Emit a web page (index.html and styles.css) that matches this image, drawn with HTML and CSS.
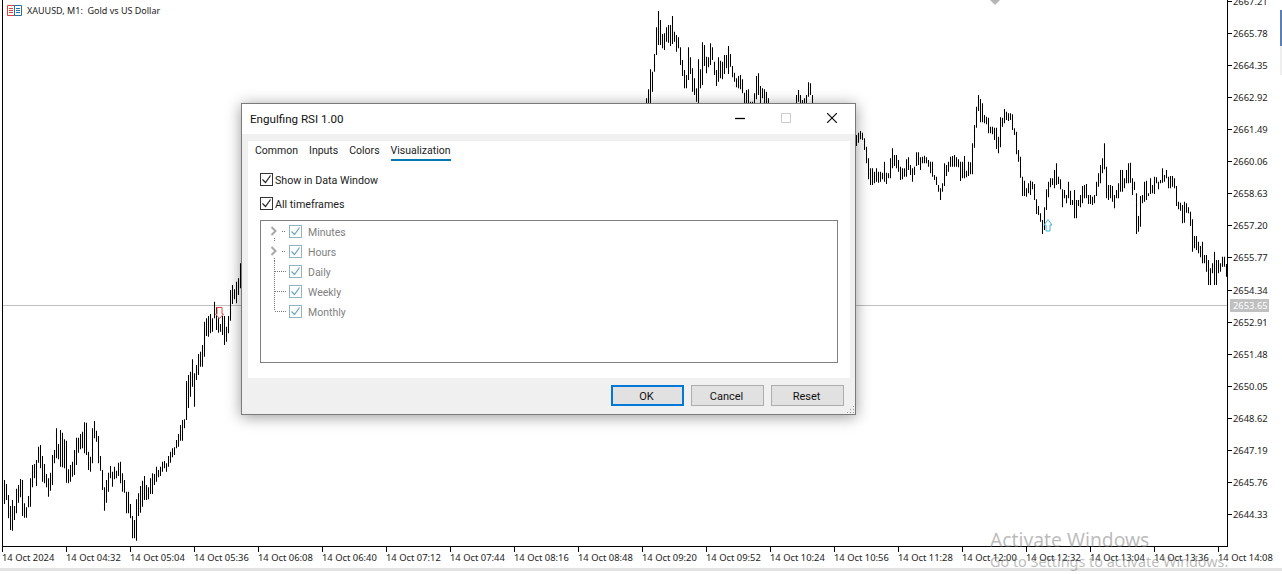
FILE: index.html
```html
<!DOCTYPE html>
<html lang="en">
<head>
  <meta charset="UTF-8">
  <title>XAUUSD, M1</title>
  <link rel="stylesheet" href="styles.css">
</head>
<body>
  <svg class="defs" width="0" height="0">
    <symbol id="tick" viewBox="0 0 13 13">
      <path d="M2.5 6.5 5.5 9.5 10.5 2.5" fill="none" stroke="currentColor" stroke-width="1.2"/>
    </symbol>
    <symbol id="branch-open" viewBox="0 0 28 20">
      <path d="M10.5 6 14.5 10 10.5 14" fill="none" stroke="#a8a8a8" stroke-width="2"/>
      <path d="M21 10.5H25M13.5 17V20" fill="none" stroke="#777" stroke-dasharray="1 1"/>
    </symbol>
    <symbol id="branch-mid" viewBox="0 0 28 20">
      <path d="M13.5 0V20M14 10.5H25" fill="none" stroke="#777" stroke-dasharray="1 1"/>
    </symbol>
    <symbol id="branch-end" viewBox="0 0 28 20">
      <path d="M13.5 0V10M14 10.5H25" fill="none" stroke="#777" stroke-dasharray="1 1"/>
    </symbol>
  </svg>

  <div class="terminal">
    <div class="chart-row">
      <div class="plot">
        <svg class="bars" viewBox="3 0 1224 546" width="1224" height="546">
          <path class="price-line" d="M3 305.5H1227"/>
          <path id="bars-path" class="bars-path" d=""/>
          <polygon class="arrow-down" points="217,307.5 222,307.5 222,314 223.5,314 219.5,318.5 215.5,314 217,314"/>
          <polygon class="arrow-up" points="1048,219.5 1052,225 1050,225 1050,231 1046,231 1046,225 1044,225"/>
          <polygon class="marker" points="995,5 990,0 1000,0"/>
        </svg>
        <div class="legend">
          <svg class="legend-icon" viewBox="0 0 15 11" width="15" height="11">
            <path d="M.5.5H7.5V10.5H.5ZM2 3.5H6M2 5.5H6M2 7.5H6" fill="none" stroke="#d0473c"/>
            <path d="M7.5.5H14.5V10.5H7.5ZM9 3.5H13M9 5.5H13M9 7.5H13" fill="none" stroke="#2a6f9e"/>
          </svg>
          <span>XAUUSD, M1:&nbsp; Gold vs US Dollar</span>
        </div>
      </div>
      <div class="price-axis">
        <ul class="price-list">
          <li>2667.21</li>
          <li>2665.78</li>
          <li>2664.35</li>
          <li>2662.92</li>
          <li>2661.49</li>
          <li>2660.06</li>
          <li>2658.63</li>
          <li>2657.20</li>
          <li>2655.77</li>
          <li>2654.34</li>
          <li>2652.91</li>
          <li>2651.48</li>
          <li>2650.05</li>
          <li>2648.62</li>
          <li>2647.19</li>
          <li>2645.76</li>
          <li>2644.33</li>
        </ul>
        <span class="price-tag">2653.65</span>
      </div>
      <div class="edge">
        <div class="edge-blue"></div>
        <div class="edge-light"></div>
      </div>
    </div>

    <div class="time-axis">
      <span>14 Oct 2024</span>
      <span>14 Oct 04:32</span>
      <span>14 Oct 05:04</span>
      <span>14 Oct 05:36</span>
      <span>14 Oct 06:08</span>
      <span>14 Oct 06:40</span>
      <span>14 Oct 07:12</span>
      <span>14 Oct 07:44</span>
      <span>14 Oct 08:16</span>
      <span>14 Oct 08:48</span>
      <span>14 Oct 09:20</span>
      <span>14 Oct 09:52</span>
      <span>14 Oct 10:24</span>
      <span>14 Oct 10:56</span>
      <span>14 Oct 11:28</span>
      <span>14 Oct 12:00</span>
      <span>14 Oct 12:32</span>
      <span>14 Oct 13:04</span>
      <span>14 Oct 13:36</span>
      <span>14 Oct 14:08</span>
    </div>
    <div class="bottom-strip"></div>

    <div class="watermark">
      <div class="watermark-big">Activate Windows</div>
      <div class="watermark-small">Go to Settings to activate Windows.</div>
    </div>

    <div class="dialog">
      <div class="titlebar">
        <span class="title">Engulfing RSI 1.00</span>
        <div class="win-buttons">
          <svg viewBox="0 0 10 10" width="10" height="10"><path d="M0 5.5H10" stroke="#000" stroke-width="1.3"/></svg>
          <svg viewBox="0 0 10 10" width="10" height="10"><path d="M.5.5H9.5V9.5H.5Z" fill="none" stroke="#ccc"/></svg>
          <svg viewBox="0 0 10 10" width="10" height="10"><path d="M0 0 10 10M10 0 0 10" stroke="#000" stroke-width="1.1"/></svg>
        </div>
      </div>

      <div class="panel">
        <div class="tabs">
          <span class="tab">Common</span>
          <span class="tab">Inputs</span>
          <span class="tab">Colors</span>
          <span class="tab active">Visualization</span>
        </div>

        <div class="option option-first">
          <span class="check"><svg width="13" height="13"><use href="#tick"/></svg></span>
          <span class="label">Show in Data Window</span>
        </div>
        <div class="option">
          <span class="check"><svg width="13" height="13"><use href="#tick"/></svg></span>
          <span class="label">All timeframes</span>
        </div>

        <ul class="tree">
          <li>
            <svg class="branch" width="28" height="20"><use href="#branch-open"/></svg>
            <span class="check check-off"><svg width="13" height="13"><use href="#tick"/></svg></span>
            <span class="label">Minutes</span>
          </li>
          <li>
            <svg class="branch" width="28" height="20"><use href="#branch-open"/></svg>
            <span class="check check-off"><svg width="13" height="13"><use href="#tick"/></svg></span>
            <span class="label">Hours</span>
          </li>
          <li>
            <svg class="branch" width="28" height="20"><use href="#branch-mid"/></svg>
            <span class="check check-off"><svg width="13" height="13"><use href="#tick"/></svg></span>
            <span class="label">Daily</span>
          </li>
          <li>
            <svg class="branch" width="28" height="20"><use href="#branch-mid"/></svg>
            <span class="check check-off"><svg width="13" height="13"><use href="#tick"/></svg></span>
            <span class="label">Weekly</span>
          </li>
          <li>
            <svg class="branch" width="28" height="20"><use href="#branch-end"/></svg>
            <span class="check check-off"><svg width="13" height="13"><use href="#tick"/></svg></span>
            <span class="label">Monthly</span>
          </li>
        </ul>
      </div>

      <div class="dialog-footer">
        <button class="btn btn-default">OK</button>
        <button class="btn">Cancel</button>
        <button class="btn">Reset</button>
      </div>
      <svg class="gripper" viewBox="0 0 9 9" width="9" height="9">
        <path d="M7 1h1v1H7zM4 4h1v1H4zM7 4h1v1H7zM1 7h1v1H1zM4 7h1v1H4zM7 7h1v1H7z" fill="#999"/>
      </svg>
    </div>
  </div>

  <script src="chart.js"></script>
</body>
</html>
```

FILE: styles.css
```css
* {
  box-sizing: border-box;
}
body {
  margin: 0;
  background-color: #fff;
  font-family: "Noto Sans", Arial, sans-serif;
  color: #000;
}
ul {
  list-style: none;
  margin: 0;
  padding: 0;
}
.defs {
  position: absolute;
}
.terminal {
  position: relative;
  display: flex;
  flex-direction: column;
  width: 1282px;
  height: 574px;
  overflow: hidden;
}

/* chart */
.chart-row {
  display: flex;
  height: 547px;
}
.plot {
  position: relative;
  width: 1225px;
  margin-left: 2px;
  border-left: 1px solid #000;
  border-bottom: 1px solid #000;
}
.bars {
  position: absolute;
  left: 0;
  top: 0;
}
.bars-path {
  fill: none;
  stroke: #000;
  stroke-width: 1.05;
}
.price-line {
  fill: none;
  stroke: #c0c0c0;
}
.arrow-down {
  fill: #fff;
  stroke: #e04a44;
}
.arrow-up {
  fill: #fff;
  stroke: #45b2d8;
}
.marker {
  fill: #b5b5b5;
}
.legend {
  position: absolute;
  left: 4px;
  top: 5px;
  display: flex;
  align-items: center;
  gap: 5px;
  font-size: 9px;
  line-height: 11px;
  color: #222;
}

/* price axis */
.price-axis {
  position: relative;
  width: 53px;
  border-left: 1px solid #000;
  overflow: hidden;
}
.price-list {
  margin-top: -14.9px;
}
.price-list li {
  display: flex;
  align-items: center;
  gap: 1px;
  height: 32.1px;
  font-size: 9.4px;
  color: #222;
}
.price-list li::before {
  content: "";
  width: 4px;
  height: 1px;
  background-color: #000;
}
.price-tag {
  position: absolute;
  left: 2px;
  top: 299px;
  width: 39px;
  height: 13px;
  padding-left: 3px;
  background-color: #c0c0c0;
  color: #fff;
  font-size: 9.4px;
  line-height: 13px;
}
.edge {
  width: 2px;
  padding-top: 10px;
}
.edge-blue {
  height: 36px;
  background-color: #5a7fb5;
}
.edge-light {
  height: 29px;
  background-color: #eee;
}

/* time axis */
.time-axis {
  display: flex;
  height: 21px;
  padding-left: 2px;
}
.time-axis span {
  flex: none;
  width: 64px;
  font-size: 9.4px;
  line-height: 12px;
  color: #222;
  white-space: nowrap;
}
.time-axis span::before {
  content: "";
  display: block;
  width: 1px;
  height: 5px;
  background-color: #000;
}
.bottom-strip {
  height: 3px;
  background-color: #e3e3e3;
}

.watermark {
  position: absolute;
  left: 990px;
  top: 527px;
  color: rgba(120, 120, 120, 0.5);
  white-space: nowrap;
}
.watermark-big {
  font-size: 19.3px;
  line-height: 26px;
}
.watermark-small {
  font-size: 14.4px;
  line-height: 18px;
}

/* dialog */
.dialog {
  position: absolute;
  left: 241px;
  top: 103px;
  display: flex;
  flex-direction: column;
  width: 615px;
  height: 312px;
  border: 1px solid #7a7a7a;
  background-color: #f0f0f0;
  box-shadow: 0 2px 14px rgba(0, 0, 0, 0.4);
  font-family: Roboto, Arial, sans-serif;
  font-size: 11px;
}
.titlebar {
  display: flex;
  align-items: center;
  justify-content: space-between;
  height: 30px;
  padding: 0 18px 2px 8px;
  background-color: #fff;
}
.title {
  padding-top: 2px;
  font-size: 11.6px;
  color: #111;
}
.win-buttons {
  display: flex;
  gap: 36px;
}
.panel {
  width: 602px;
  height: 237px;
  margin: 7px 0 0 6px;
  padding: 0 12px;
  background-color: #fff;
}
.tabs {
  display: flex;
  gap: 11px;
  height: 20px;
  margin-left: -5px;
}
.tab {
  height: 20px;
  padding-top: 2px;
  font-size: 10.5px;
  line-height: 16px;
  color: #222;
}
.tab.active {
  border-bottom: 2px solid #0078b4;
}
.option {
  display: flex;
  align-items: center;
  gap: 2px;
  height: 13px;
  margin-top: 11px;
  font-size: 10.7px;
  color: #222;
}
.option-first {
  margin-top: 12px;
}
.label {
  padding-top: 2px;
}
.check {
  flex: none;
  width: 13px;
  height: 13px;
  border: 1px solid #333;
  color: #222;
}
.check svg {
  display: block;
  margin: -1px;
}
.tree {
  height: 143px;
  margin-top: 10px;
  border: 1px solid #808080;
  font-size: 10.5px;
  color: #808080;
}
.tree li {
  display: flex;
  align-items: center;
  gap: 6px;
  height: 20px;
}
.branch {
  flex: none;
  margin-right: -6px;
}
.check-off {
  border-color: #90b4c4;
  color: #6aa5bd;
}
.dialog-footer {
  display: flex;
  justify-content: flex-end;
  gap: 7px;
  padding: 7px 11px 0 0;
}
.btn {
  width: 73px;
  height: 21px;
  padding: 2px 2px 0 0;
  border: 1px solid #adadad;
  border-radius: 0;
  background-color: #e1e1e1;
  color: #111;
  font: inherit;
}
.btn-default {
  border: 2px solid #0078d7;
}
.gripper {
  position: absolute;
  right: 0;
  bottom: 0;
}
```

FILE: chart.js
```js
// bars traced off the chart, two columns per bar (top, bottom) in 1/3 px from the y origin of each run
const runs = [
  { x: 4, y: 400, bars: [
    240,312, 252,300, 285,355, 318,390, 300,392, 318,360, 266,340, 255,308, 237,292, 240,348,
    310,353, 322,353, 288,322, 235,320, 195,262, 192,235, 180,258, 140,188, 135,205, 168,245,
    192,250, 222,262, 235,290, 218,272, 165,255, 150,190, 85,175, 132,178, 90,200, 98,202,
    118,205, 122,248, 208,250, 195,245, 185,230, 150,225, 113,195, 113,158, 102,148, 95,145,
    67,160, 68,165, 155,210, 170,215, 85,190, 63,115, 92,125, 108,190, 168,212, 210,270,
    262,332, 240,308, 218,275, 198,235, 215,260, 200,238, 212,235, 188,228, 185,250, 220,275,
    240,278, 275,340, 275,340, 312,355, 348,415, 360,415, 298,422, 280,348, 258,338, 242,320,
    228,300, 255,300, 262,298, 235,282, 220,282, 222,255, 200,245, 210,232, 200,228, 185,215,
    183,205, 190,215, 168,200, 155,188, 145,172, 142,165, 120,145, 102,140, 75,122, 60,122,
    58,85
  ] },
  { x: 186, y: 250, bars: [
    393,510, 375,474, 365,440, 328,410, 370,470, 345,390, 312,375, 305,350, 285,350, 215,320,
    205,258, 198,260, 192,250, 205,245, 155,205, 172,240, 205,248, 222,245, 198,255, 198,285,
    230,275, 198,250, 120,212, 105,162, 118,148, 95,160, 85,135, 40,115
  ] },
  { x: 646, y: 0, bars: [
    295,310, 268,310, 208,310, 215,275, 162,215, 82,165, 33,135, 60,135, 102,145, 100,150,
    82,125, 75,128, 75,138, 48,132, 95,125, 105,155, 112,145, 142,195, 180,228, 210,265,
    225,265, 142,240, 172,222, 205,275, 235,285, 265,305, 178,310, 208,265, 127,255, 135,198,
    170,220, 172,202, 130,195, 142,180, 185,225, 210,258, 172,245, 182,235, 185,238, 165,222,
    165,205, 138,222, 162,200, 198,232, 218,245, 235,262, 228,265, 225,268, 238,280, 278,310,
    270,310, 268,310, 305,310, 305,310, 280,310, 228,298, 220,285, 258,310, 265,295, 268,310,
    275,310, 295,310
  ] },
  { x: 796, y: 0, bars: [
    285,310, 270,305, 285,310, 300,310, 295,310, 285,310, 247,290, 250,285, 285,310
  ] },
  { x: 856, y: 120, bars: [
    45,78, 38,68, 33,58, 38,60, 55,90, 80,130, 115,178, 145,195, 145,195, 155,190,
    145,185, 155,188, 155,185, 158,178, 125,185, 158,192, 160,175, 115,175, 85,145, 105,138,
    105,145, 120,155, 140,180, 145,178, 145,170, 118,170, 112,150, 135,165, 145,185, 140,165,
    97,138, 97,135, 112,150, 110,130, 107,130, 112,130, 120,140, 125,160, 125,170, 165,180,
    170,195, 195,215, 205,240, 190,215, 130,198, 135,168, 125,155, 110,140, 108,140, 105,140,
    112,140, 118,142, 125,183, 125,175, 108,175, 152,172, 125,168
  ] },
  { x: 970, y: 85, bars: [
    232,268, 175,268, 120,188, 65,128, 30,78, 42,112, 55,112, 90,115, 95,118, 98,145,
    125,145, 125,148, 128,165, 128,192, 155,205, 97,187, 98,125, 72,115, 80,105, 85,108,
    85,105, 88,135, 130,150, 140,208, 195,230, 215,278
  ] },
  { x: 1022, y: 120, bars: [
    170,228, 182,228, 205,230, 190,220, 182,225, 185,208, 192,240, 238,282, 258,285, 280,305,
    300,342, 262,330, 208,270, 185,232, 175,202, 175,195, 150,205, 130,195, 170,192, 178,208,
    208,262, 210,235, 225,250, 185,235, 212,255, 240,255, 210,295, 240,295, 240,258, 225,262,
    198,250, 195,235, 192,235, 225,252, 225,252, 230,255, 225,250, 185,228, 160,200, 135,190,
    115,160, 70,148, 140,235, 195,240, 195,235, 198,245, 225,265, 210,235, 190,235, 150,215,
    150,215, 175,205, 150,190, 130,190, 128,188, 175,225, 185,210, 220,342, 288,335, 228,320,
    225,250, 185,245, 182,240, 220,228, 175,222, 195,220, 170,222, 172,190, 185,208, 180,190,
    145,188, 165,185, 150,175, 170,205, 168,205, 168,200, 175,205, 198,258, 245,268, 248,272,
    255,310, 245,308, 250,278, 262,280, 275,318, 298,395, 348,385, 348,390, 365,400, 378,412,
    365,430, 405,430, 405,455, 420,495, 445,495, 430,460, 395,495, 420,495, 420,460, 430,455,
    410,440, 410,440, 432,470
  ] }
];

let d = '';
runs.forEach((run) => {
  for (let i = 0; i < run.bars.length; i += 2) {
    const x = run.x + i + 0.5;
    const top = (run.y + run.bars[i] / 3).toFixed(1);
    const bottom = (run.y + run.bars[i + 1] / 3).toFixed(1);
    d += `M${x} ${top}V${bottom}`;
  }
});
document.getElementById('bars-path').setAttribute('d', d);
```
